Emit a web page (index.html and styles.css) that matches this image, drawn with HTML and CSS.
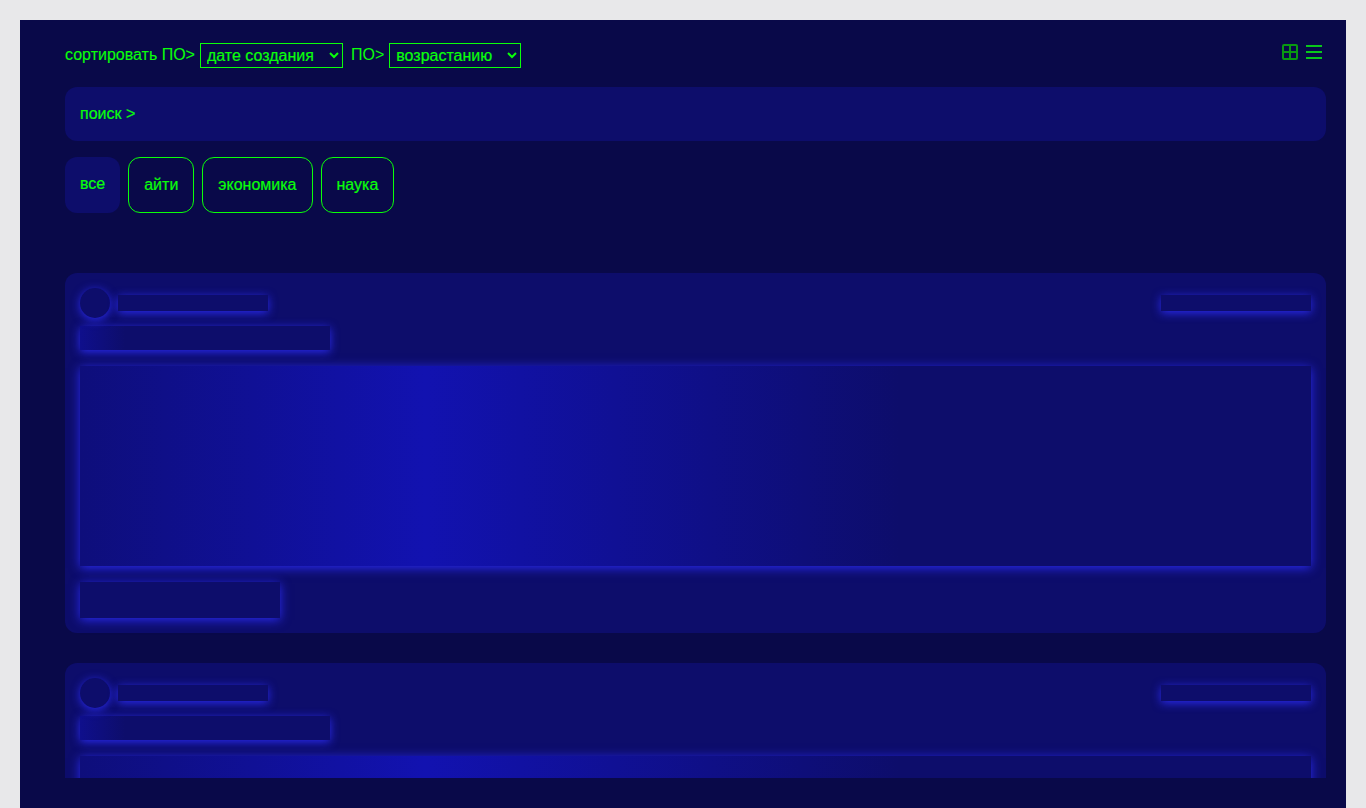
FILE: index.html
```html
<!DOCTYPE html>
<html lang="ru">
<head>
<meta charset="utf-8">
<title>Статьи</title>
<link rel="stylesheet" href="styles.css">
</head>
<body>
<main class="page">
  <header class="toolbar">
    <div class="sort">
      <label class="sort-label">сортировать ПО&gt;</label>
      <select class="select select-field"><option>дате создания</option></select>
      <label class="sort-label sort-order">ПО&gt;</label>
      <select class="select select-order"><option>возрастанию</option></select>
    </div>
    <div class="views">
      <svg class="icon icon-tile" viewBox="0 0 16 16"><rect x="1" y="1" width="14" height="14" rx="1"/><path d="M8 1v14M1 8h14"/></svg>
      <svg class="icon" viewBox="0 0 16 16"><path d="M0 2h16M0 8h16M0 14h16"/></svg>
    </div>
  </header>
  <div class="search">поиск &gt;</div>
  <nav class="tabs">
    <div class="tab tab-active">все</div>
    <div class="tab">айти</div>
    <div class="tab">экономика</div>
    <div class="tab">наука</div>
  </nav>
  <section class="list">
    <article class="card">
      <div class="card-head">
        <div class="skeleton avatar"></div>
        <div class="skeleton line"></div>
        <div class="skeleton line line-date"></div>
      </div>
      <div class="skeleton title"></div>
      <div class="skeleton image"></div>
      <div class="skeleton button"></div>
    </article>
    <article class="card">
      <div class="card-head">
        <div class="skeleton avatar"></div>
        <div class="skeleton line"></div>
        <div class="skeleton line line-date"></div>
      </div>
      <div class="skeleton title"></div>
      <div class="skeleton image"></div>
      <div class="skeleton button"></div>
    </article>
  </section>
</main>
</body>
</html>
```
FILE: styles.css
```css
* { box-sizing: border-box; }
body {
  margin: 0;
  height: 808px;
  padding: 20px 20px 0;
  overflow: hidden;
  background: #e8e8ea;
  color: #0aff0a;
  font: 16px/24px "Liberation Sans", Arial, sans-serif;
  -webkit-text-stroke: 0.2px #0aff0a;
}
.page {
  display: flex;
  flex-direction: column;
  height: 788px;
  padding: 23px 20px 30px 45px;
  background: #090949;
}
.toolbar { display: flex; justify-content: space-between; height: 25px; }
.sort { display: flex; }
.sort-label { line-height: 24px; -webkit-text-stroke-width: 0.1px; }
.sort-order { margin-left: 8px; -webkit-text-stroke-width: 0; }
.select {
  margin: 0 0 0 5px;
  height: 25px;
  padding: 0 3px 0 2px;
  border: 1px solid #0aff0a;
  border-radius: 0;
  background: transparent;
  color: #0aff0a;
  font: 16px "Liberation Sans", Arial, sans-serif;
  outline: none;
  border-right-width: 1px;
}
.select-field { width: 142px; border-right: 0; box-shadow: 1px 0 #0aff0a; margin-right: 1px; }
.select-order { width: 131px; border-right: 0; box-shadow: 1px 0 #0aff0a; }
.views { display: flex; gap: 8px; padding: 1px 4px 0 0; }
.icon { width: 16px; height: 16px; fill: none; stroke: #09c71b; stroke-width: 2; }
.icon-tile { stroke: #099911; }
.search {
  flex: none;
  margin-top: 19px;
  height: 54px;
  padding: 15px;
  border-radius: 12px;
  background: #0d0d6b;
}
.tabs { display: flex; flex: none; gap: 8px; margin-top: 16px; height: 56px; }
.tab {
  padding: 15px;
  border: 1px solid #0aff0a;
  border-radius: 12px;
}
.tab-active { border: 0; background: #0d0d6b; }
.list { flex: 1; min-height: 0; margin-top: 60px; overflow: hidden; }
.card {
  height: 360px;
  margin-bottom: 30px;
  padding: 15px;
  border-radius: 12px;
  background: #0d0d6b;
}
.card-head { display: flex; align-items: center; gap: 8px; height: 30px; }
.skeleton { background: #0d0d6b; box-shadow: 0 2px 10px 0 #2a2aee; }
.avatar { width: 30px; height: 30px; border-radius: 50%; }
.line { width: 150px; height: 16px; }
.line-date { margin-left: auto; }
.title {
  width: 250px;
  height: 24px;
  margin-top: 8px;
  background: linear-gradient(90deg, #0f0f8c, #0d0d6b 45px);
}
.image {
  height: 200px;
  margin-top: 16px;
  background: linear-gradient(90deg, #0e0e7b, #1212b0 345px, #0d0d6b 820px);
}
.button { width: 200px; height: 36px; margin-top: 16px; }
```
